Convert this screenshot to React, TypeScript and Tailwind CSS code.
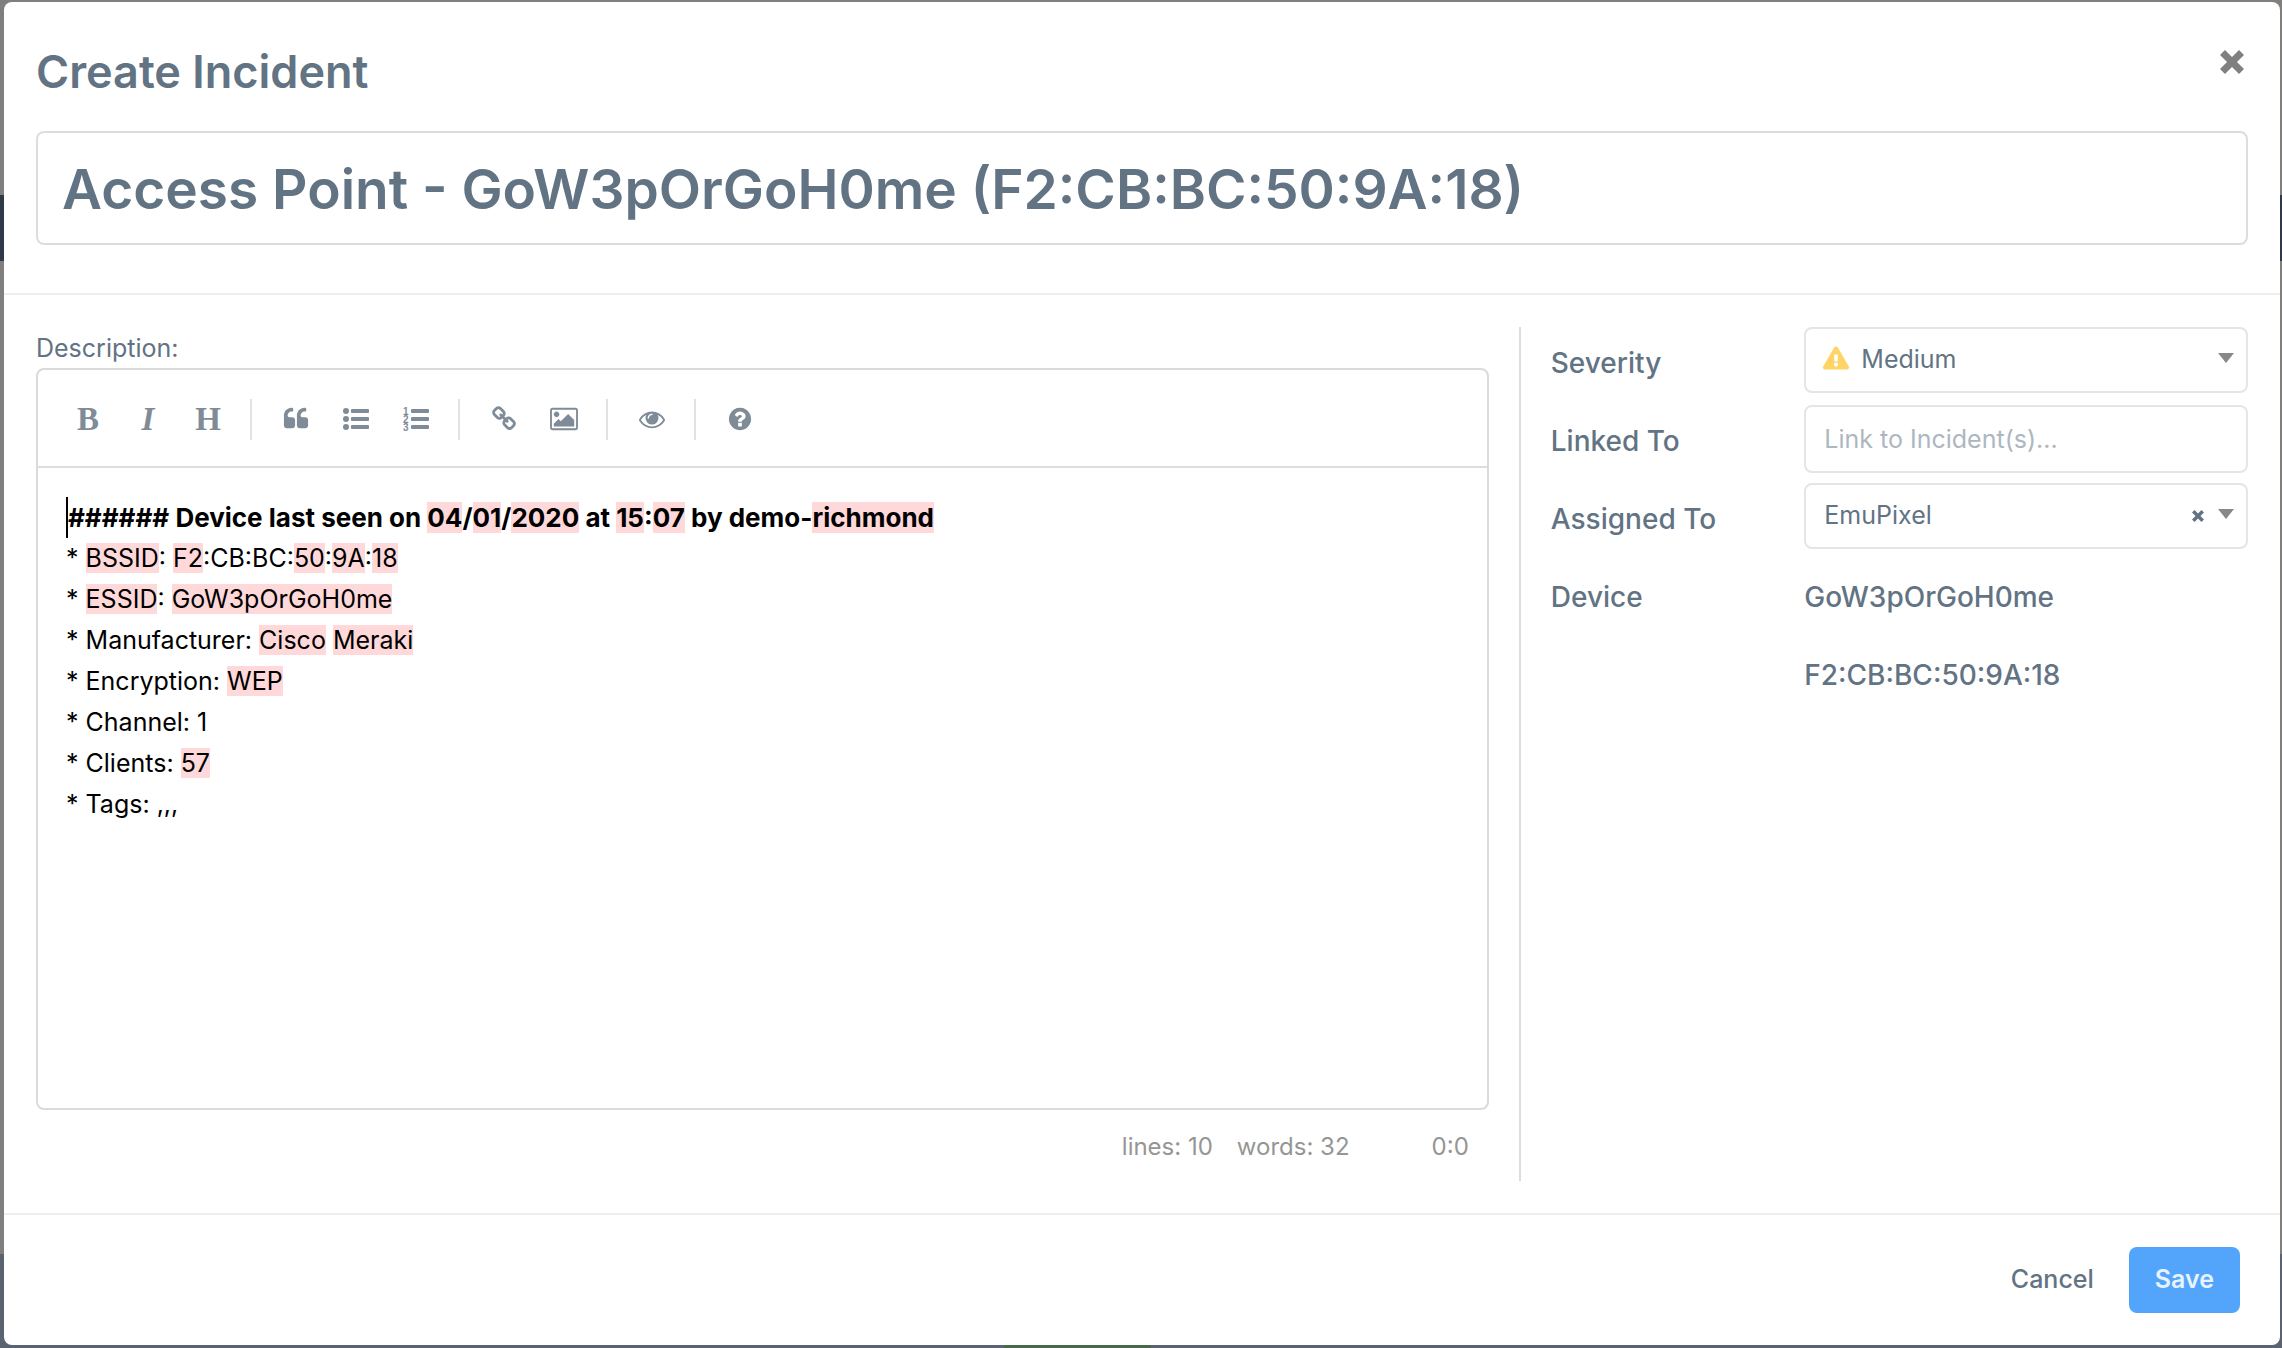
import React, {useState} from 'react';
import {FaExclamationTriangle} from 'react-icons/fa';

const DESCRIPTION = [
    '###### Device last seen on [04]/[01]/[2020] at [15]:[07] by demo-[richmond]',
    '* [BSSID]: [F2]:CB:BC:[50]:[9A]:[18]',
    '* [ESSID]: [GoW3pOrGoH0me]',
    '* Manufacturer: [Cisco] [Meraki]',
    '* Encryption: [WEP]',
    '* Channel: 1',
    '* Clients: [57]',
    '* Tags: ,,,',
];

const ICONS = {
    quote: 'M832 960v384q0 80-56 136t-136 56h-384q-80 0-136-56t-56-136v-704q0-104 40.5-198.5t109.5-163.5 163.5-109.5 198.5-40.5h64q26 0 45 19t19 45v128q0 26-19 45t-45 19h-64q-106 0-181 75t-75 181v32q0 40 28 68t68 28h224q80 0 136 56t56 136zm896 0v384q0 80-56 136t-136 56h-384q-80 0-136-56t-56-136v-704q0-104 40.5-198.5t109.5-163.5 163.5-109.5 198.5-40.5h64q26 0 45 19t19 45v128q0 26-19 45t-45 19h-64q-106 0-181 75t-75 181v32q0 40 28 68t68 28h224q80 0 136 56t56 136z',
    link: 'M1520 1216q0-40-28-68l-208-208q-28-28-68-28-42 0-72 32 3 3 19 18.5t21.5 21.5 15 19 13 25.5 3.5 27.5q0 40-28 68t-68 28q-15 0-27.5-3.5t-25.5-13-19-15-21.5-21.5-18.5-19q-33 31-33 73 0 40 28 68l206 207q27 27 68 27 40 0 68-26l147-146q28-28 28-67zm-703-705q0-40-28-68l-206-207q-28-28-68-28-39 0-68 27l-147 146q-28 28-28 67 0 40 28 68l208 208q27 27 68 27 42 0 72-31-3-3-19-18.5t-21.5-21.5-15-19-13-25.5-3.5-27.5q0-40 28-68t68-28q15 0 27.5 3.5t25.5 13 19 15 21.5 21.5 18.5 19q33-31 33-73zm895 705q0 120-85 203l-147 146q-83 83-203 83-121 0-204-85l-206-207q-83-83-83-203 0-123 88-209l-88-88q-86 88-208 88-120 0-204-84l-208-208q-84-84-84-204t85-203l147-146q83-83 203-83 121 0 204 85l206 207q83 83 83 203 0 123-88 209l88 88q86-88 208-88 120 0 204 84l208 208q84 84 84 204z',
    image: 'M640 576q0 80-56 136t-136 56-136-56-56-136 56-136 136-56 136 56 56 136zm1024 384v448h-1408v-192l320-320 160 160 512-512zm96-704h-1600q-13 0-22.5 9.5t-9.5 22.5v1216q0 13 9.5 22.5t22.5 9.5h1600q13 0 22.5-9.5t9.5-22.5v-1216q0-13-9.5-22.5t-22.5-9.5zm160 32v1216q0 66-47 113t-113 47h-1600q-66 0-113-47t-47-113v-1216q0-66 47-113t113-47h1600q66 0 113 47t47 113z',
    eye: 'M1664 960q-152-236-381-353 61 104 61 225 0 185-131.5 316.5t-316.5 131.5-316.5-131.5-131.5-316.5q0-121 61-225-229 117-381 353 133 205 333.5 326.5t434.5 121.5 434.5-121.5 333.5-326.5zm-720-384q0-20-14-34t-34-14q-125 0-214.5 89.5t-89.5 214.5q0 20 14 34t34 14 34-14 14-34q0-86 61-147t147-61q20 0 34-14t14-34zm848 384q0 34-20 69-140 230-376.5 368.5t-499.5 138.5-499.5-139-376.5-368q-20-35-20-69t20-69q140-229 376.5-368t499.5-139 499.5 139 376.5 368q20 35 20 69z',
    help: 'M1024 1376v-192q0-14-9-23t-23-9h-192q-14 0-23 9t-9 23v192q0 14 9 23t23 9h192q14 0 23-9t9-23zm256-672q0-88-55.500-163t-138.500-116-170-41q-243 0-371 213-15 24 8 42l132 100q7 6 19 6 16 0 25-12 53-68 86-92 34-24 86-24 48 0 85.500 26t37.500 59q0 38-20 61t-68 45q-63 28-115.500 86.500t-52.500 125.500v36q0 14 9 23t23 9h192q14 0 23-9t9-23q0-19 21.500-49.500t54.500-49.500q32-18 49-28.500t46-35 44.500-48 28-60.500 12.500-81zm384 192q0 209-103 385.500t-279.500 279.500-385.500 103-385.500-103-279.500-279.500-103-385.500 103-385.500 279.500-279.500 385.500-103 385.500 103 279.500 279.500 103 385.500z',
};

const GlyphIcon = ({d, wide = false}: { d: string; wide?: boolean }) => (
    <svg viewBox={wide ? '0 0 1920 1792' : '0 0 1792 1792'} className={wide ? 'h-[26px] w-7' : 'size-[26px]'} fill="currentColor">
        <path d={d}/>
    </svg>
);

const ListIcon = ({ordered = false}: { ordered?: boolean }) => (
    <svg viewBox="0 0 26 26" className="size-[26px] overflow-visible" fill="currentColor">
        {[5, 13, 21].map((y, i) => (
            <g key={y}>
                {ordered
                    ? <text x="0" y={y + 4} className="font-['Liberation_Sans'] text-[10px] font-bold">{i + 1}</text>
                    : <circle cx="3" cy={y} r="3"/>}
                <rect x="8" y={y - 2} width="18" height="4" rx="1"/>
            </g>
        ))}
    </svg>
);

const ToolButton = ({label, children}: { label: string; children: React.ReactNode }) => (
    <button type="button" aria-label={label} title={label} className="flex size-[60px] items-center justify-center font-['Liberation_Serif',serif] text-[33px] leading-none">
        {children}
    </button>
);

const Separator = () => <div className="mr-3.5 ml-3 h-[41px] w-0.5 bg-[#e2e2e2]"/>;

const CrossIcon = ({className}: { className: string }) => (
    <svg viewBox="0 0 24 24" className={className} stroke="currentColor" strokeWidth="7" fill="none">
        <path d="M2.500 2.500L21.500 21.500M21.500 2.500L2.500 21.500"/>
    </svg>
);

const Arrow = () => (
    <svg viewBox="0 0 16 10" className="h-2.5 w-4" fill="#888888">
        <path d="M0 0H16L8 10Z"/>
    </svg>
);

const DescriptionLine = ({line}: { line: string }) => (
    <>
        {line.split(/\[(.*?)\]/).map((part, i) => (
            i % 2 ? <span key={i} className="bg-[#ffd9d9]">{part}</span> : part
        ))}
    </>
);

const Row = ({label, htmlFor, children}: { label: string; htmlFor?: string; children: React.ReactNode }) => (
    <div className="grid h-[78px] grid-cols-[4fr_7fr] items-start">
        <label htmlFor={htmlFor} className="py-4 text-[28px] leading-10 font-medium">{label}</label>
        {children}
    </div>
);

const controlClass = 'w-full appearance-none rounded-lg border-2 border-[#e5e5e5] bg-white text-[25px] placeholder:text-[#adb7c1]';

const App = () => {
    const [title, setTitle] = useState('Access Point - GoW3pOrGoH0me (F2:CB:BC:50:9A:18)');
    const [description, setDescription] = useState(DESCRIPTION);
    const [severity, setSeverity] = useState('Medium');
    const [assignee, setAssignee] = useState('EmuPixel');
    const [linked, setLinked] = useState('');

    return (
        <div className="relative min-h-screen bg-[#807f7e] font-['Inter',sans-serif] text-[#627384]">
            {/* dimmed page behind the dialog */}
            <div className="absolute inset-0 flex flex-col">
                <div className="h-[195px]"/>
                <div className="h-[66px] bg-[#2f3947]"/>
                <div className="flex-1"/>
                <div className="flex h-[94px] items-end bg-[#5c6370] pl-[44%]">
                    <div className="h-1 w-[147px] bg-[#47694a]"/>
                </div>
            </div>

            <div className="relative flex min-h-screen pt-0.5 pr-0.5 pb-[3px] pl-1">
                <div role="dialog" aria-labelledby="dialog-title" className="flex flex-1 flex-col rounded-lg bg-white">
                    <header className="border-b-2 border-[#eeeeee] px-8 pt-[38px] pb-12">
                        <div className="flex items-start justify-between">
                            <h1 id="dialog-title" className="mb-[27px] text-[45px] leading-16 font-semibold">Create Incident</h1>
                            <button type="button" aria-label="Close" className="mt-2.5 mr-1 text-[#808080]">
                                <CrossIcon className="size-6"/>
                            </button>
                        </div>
                        <input
                            aria-label="Title"
                            className="h-[114px] w-full rounded-lg border-2 border-[#dddddd] px-6 pt-0.5 text-[55px] font-semibold"
                            type="text"
                            value={title}
                            onChange={(e) => setTitle(e.target.value)}/>
                    </header>

                    <div className="grid flex-1 grid-cols-[199fr_100fr] py-8">
                        <div className="flex flex-col pr-[30px] pl-8">
                            <label htmlFor="description" className="pt-0.5 text-[25px] leading-[39px]">Description:</label>
                            <div className="flex flex-1 flex-col rounded-lg border-2 border-[#dadada]">
                                <div className="flex h-[98px] items-center border-b-2 border-[#dddddd] px-5 pt-0.5 text-[#7f8b97]">
                                    <ToolButton label="Bold"><b>B</b></ToolButton>
                                    <ToolButton label="Italic"><b><i>I</i></b></ToolButton>
                                    <ToolButton label="Heading"><b>H</b></ToolButton>
                                    <Separator/>
                                    <ToolButton label="Quote"><GlyphIcon d={ICONS.quote}/></ToolButton>
                                    <ToolButton label="Generic List"><ListIcon/></ToolButton>
                                    <ToolButton label="Numbered List"><ListIcon ordered/></ToolButton>
                                    <Separator/>
                                    <ToolButton label="Create Link"><GlyphIcon d={ICONS.link}/></ToolButton>
                                    <ToolButton label="Insert Image"><GlyphIcon d={ICONS.image} wide/></ToolButton>
                                    <Separator/>
                                    <ToolButton label="Toggle Preview"><GlyphIcon d={ICONS.eye}/></ToolButton>
                                    <Separator/>
                                    <ToolButton label="Markdown Guide"><GlyphIcon d={ICONS.help}/></ToolButton>
                                </div>
                                <div className="relative flex-1 px-7 py-[29px] text-[25px] leading-[41px] text-black">
                                    <div aria-hidden="true">
                                        {description.map((line, i) => (
                                            <div key={i} className={i === 0 ? 'border-l-2 border-black text-[26px] font-bold' : ''}>
                                                <DescriptionLine line={line}/>
                                            </div>
                                        ))}
                                    </div>
                                    <textarea
                                        id="description"
                                        className="absolute inset-0 resize-none bg-transparent px-7 py-[29px] text-transparent outline-none"
                                        value={description.join('\n').replace(/[[\]]/g, '')}
                                        onChange={(e) => setDescription(e.target.value.split('\n'))}/>
                                </div>
                            </div>
                            <div className="flex justify-end pt-4 pr-5 pb-3.5 text-[24px] leading-[41px] text-[#959694]">
                                <span>lines: 10</span>
                                <span className="ml-6">words: 32</span>
                                <span className="ml-[82px]">0:0</span>
                            </div>
                        </div>

                        <div className="border-l-2 border-[#dddddd] pr-8 pl-[30px]">
                            <Row label="Severity" htmlFor="severity">
                                <div className="relative">
                                    <select id="severity" className={controlClass + ' h-[66px] pr-12 pl-[55px]'} value={severity} onChange={(e) => setSeverity(e.target.value)}>
                                        <option>Medium</option>
                                    </select>
                                    <span className="pointer-events-none absolute inset-0 flex items-center justify-between pr-3.5 pb-1 pl-[19px]">
                                        <FaExclamationTriangle className="size-[26px] text-[#ffd466]"/>
                                        <Arrow/>
                                    </span>
                                </div>
                            </Row>
                            <Row label="Linked To" htmlFor="linked">
                                <input id="linked" className={controlClass + ' h-[68px] px-[18px]'} placeholder="Link to Incident(s)..." value={linked} onChange={(e) => setLinked(e.target.value)}/>
                            </Row>
                            <Row label="Assigned To" htmlFor="assigned">
                                <div className="relative">
                                    <select id="assigned" className={controlClass + ' h-[66px] px-[18px]'} value={assignee} onChange={(e) => setAssignee(e.target.value)}>
                                        <option value=""/>
                                        <option>EmuPixel</option>
                                    </select>
                                    <span className="pointer-events-none absolute inset-0 flex items-center justify-end gap-3.5 pr-3.5 pb-1">
                                        <button type="button" aria-label="Clear" className="pointer-events-auto pt-1" onClick={() => setAssignee('')}>
                                            <CrossIcon className="size-3"/>
                                        </button>
                                        <Arrow/>
                                    </span>
                                </div>
                            </Row>
                            <dl className="grid grid-cols-[4fr_7fr] text-[28px] leading-10 font-medium">
                                <dt className="py-4">Device</dt>
                                <dd className="py-4">GoW3pOrGoH0me</dd>
                                <dd className="col-start-2 py-[22px]">F2:CB:BC:50:9A:18</dd>
                            </dl>
                        </div>
                    </div>

                    <footer className="flex items-center justify-end gap-[9px] border-t-2 border-[#eeeeee] px-10 py-8 text-[25px] font-medium">
                        <button type="button" className="h-[66px] px-[26px]">Cancel</button>
                        <button type="submit" className="h-[66px] rounded-lg bg-[#53a5fb] px-[26px] font-semibold text-[#e8f3ff]">Save</button>
                    </footer>
                </div>
            </div>
        </div>
    );
};

export default App;
